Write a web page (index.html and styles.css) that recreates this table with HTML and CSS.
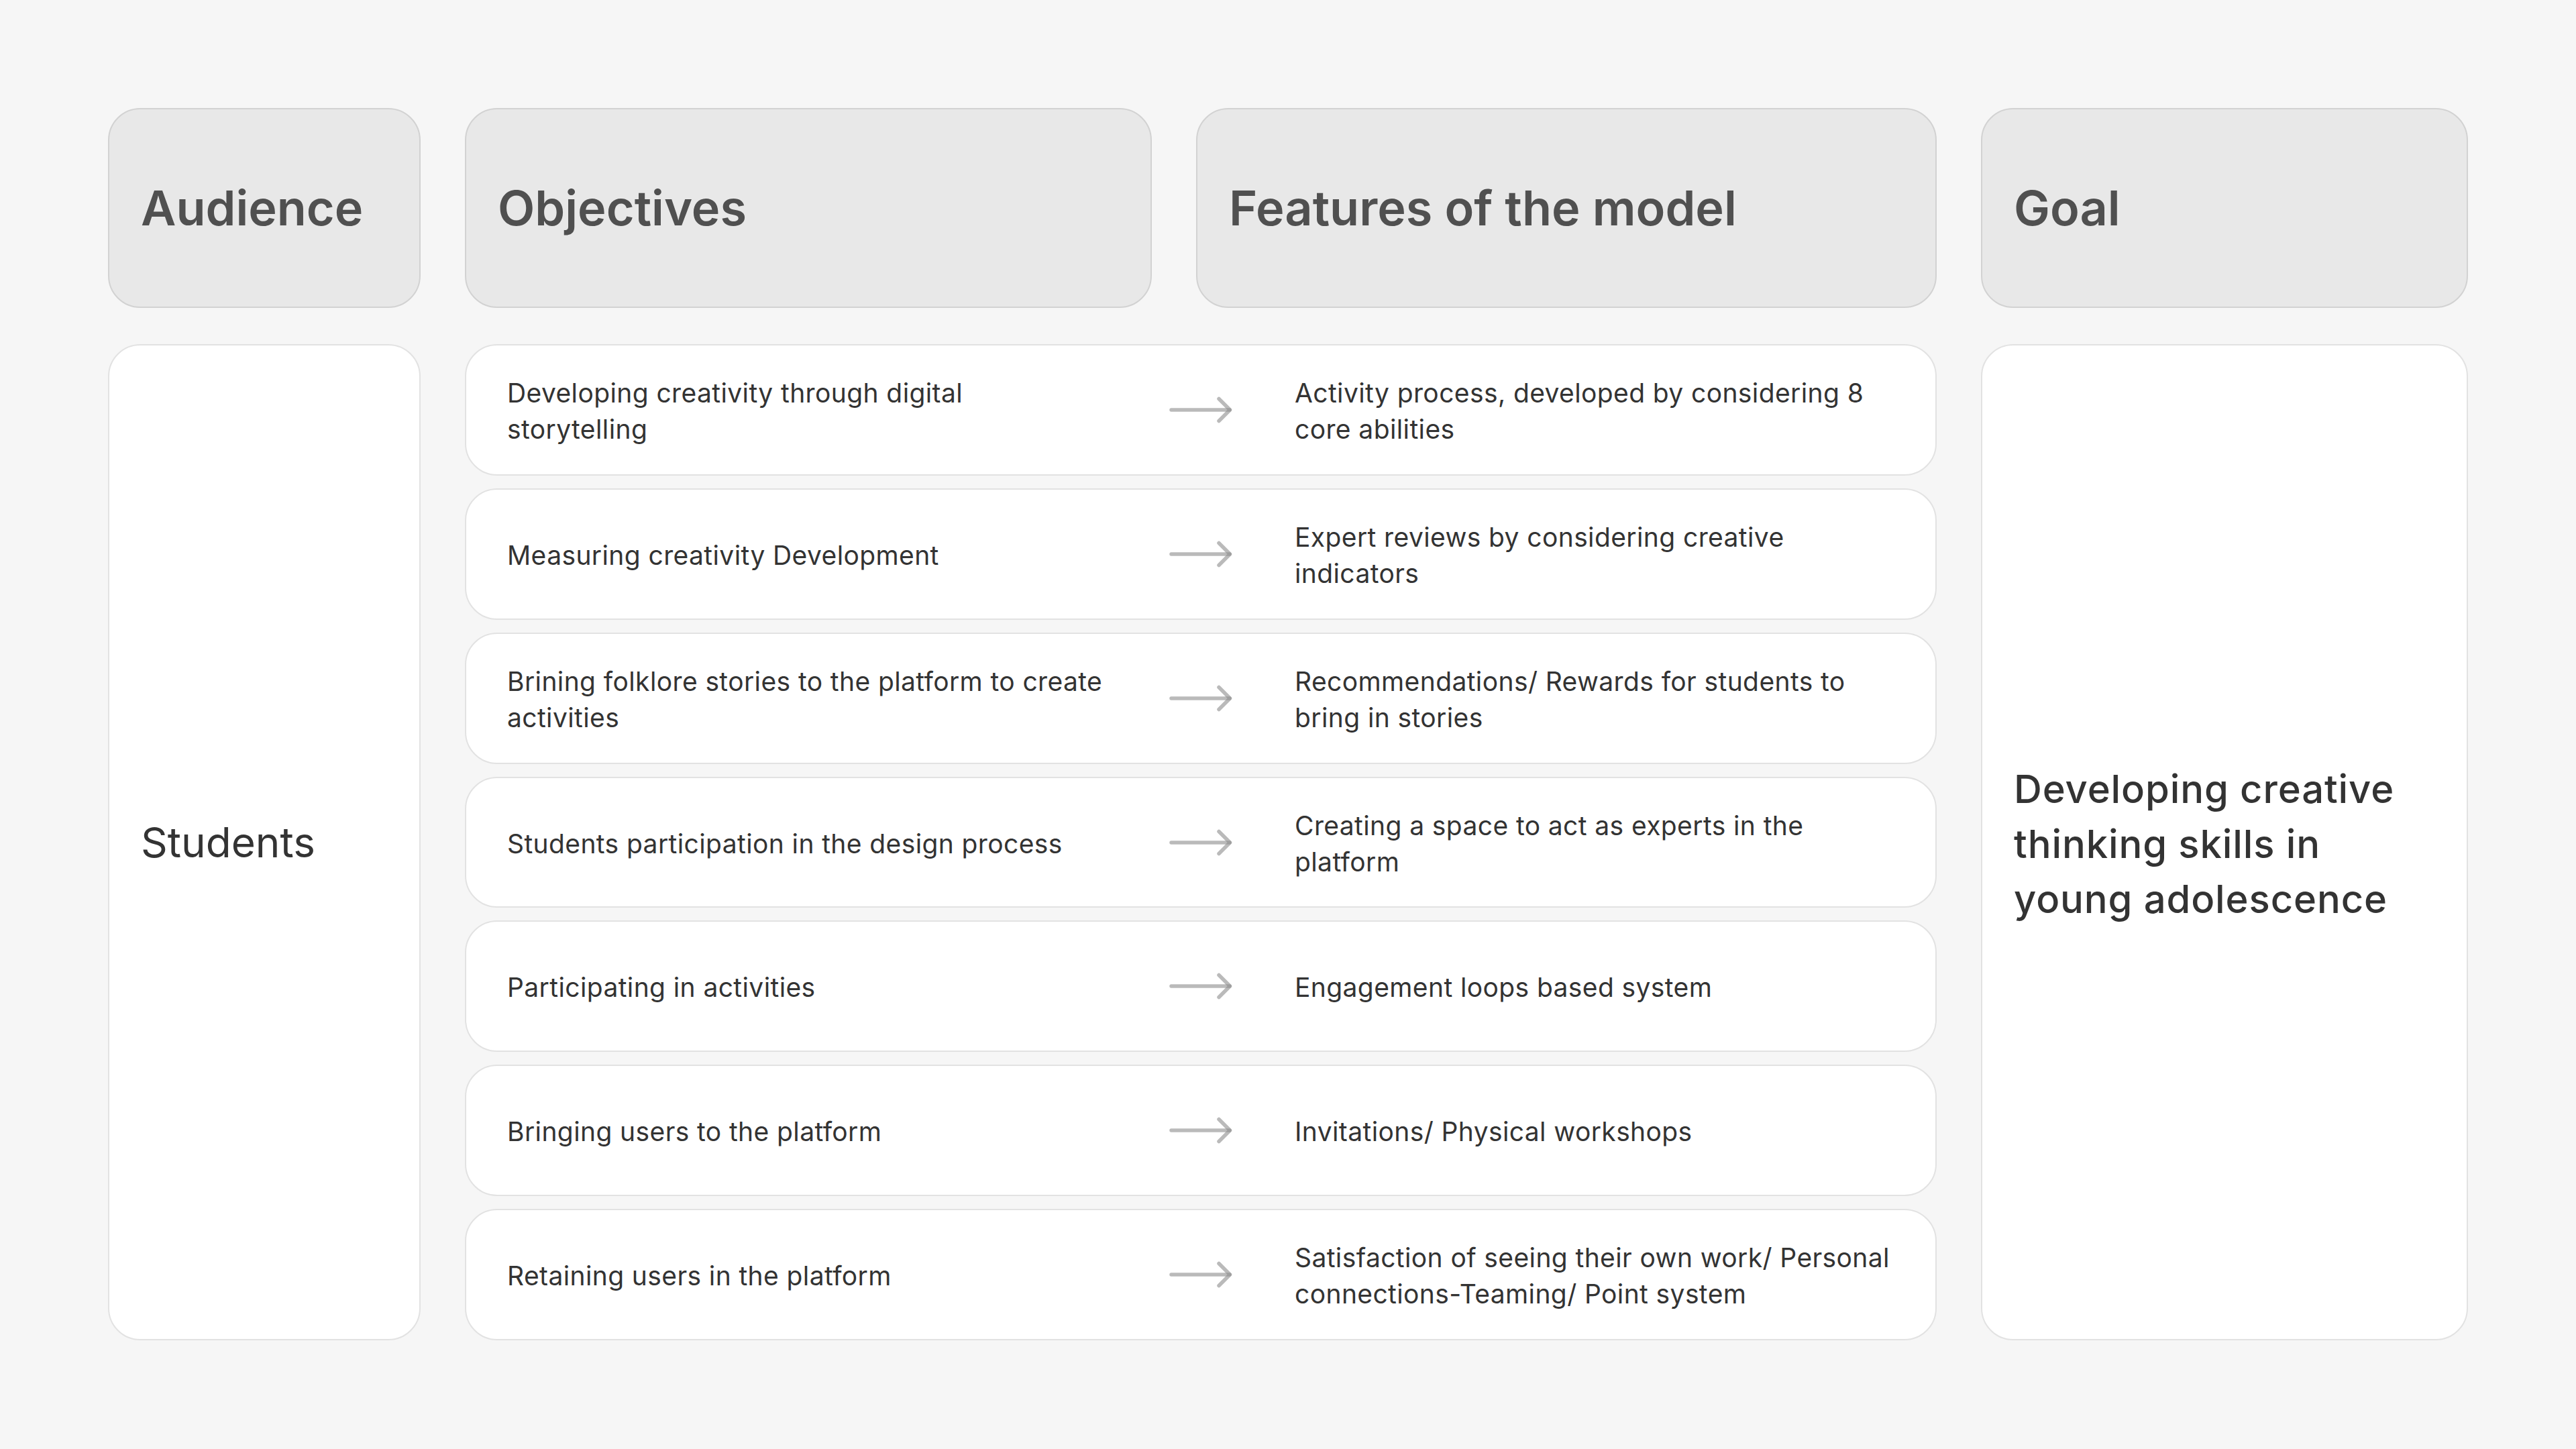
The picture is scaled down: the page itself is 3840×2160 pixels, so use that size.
FILE: index.html
```html
<!DOCTYPE html>
<html lang="en">
<head>
<meta charset="utf-8">
<title>Creativity model</title>
<link rel="stylesheet" href="styles.css">
</head>
<body>
<main class="board">
  <div class="head"><h2 class="head-title">Audience</h2></div>
  <div class="head"><h2 class="head-title">Objectives</h2></div>
  <div class="head"><h2 class="head-title">Features of the model</h2></div>
  <div class="head"><h2 class="head-title">Goal</h2></div>

  <div class="card audience"><p class="audience-text">Students</p></div>

  <div class="rows">
    <div class="row">
      <p class="cell">Developing creativity through digital<br>storytelling</p>
      <svg class="arrow" viewBox="0 0 94 40" width="94" height="40"><path d="M3 20H90"/><path d="M74 3.5L90.5 20L74 36.5"/></svg>
      <p class="cell feat">Activity process, developed by considering 8<br>core abilities</p>
    </div>
    <div class="row">
      <p class="cell">Measuring creativity Development</p>
      <svg class="arrow" viewBox="0 0 94 40" width="94" height="40"><path d="M3 20H90"/><path d="M74 3.5L90.5 20L74 36.5"/></svg>
      <p class="cell feat">Expert reviews by considering creative<br>indicators</p>
    </div>
    <div class="row">
      <p class="cell">Brining folklore stories to the platform to create<br>activities</p>
      <svg class="arrow" viewBox="0 0 94 40" width="94" height="40"><path d="M3 20H90"/><path d="M74 3.5L90.5 20L74 36.5"/></svg>
      <p class="cell feat">Recommendations/ Rewards for students to<br>bring in stories</p>
    </div>
    <div class="row">
      <p class="cell">Students participation in the design process</p>
      <svg class="arrow" viewBox="0 0 94 40" width="94" height="40"><path d="M3 20H90"/><path d="M74 3.5L90.5 20L74 36.5"/></svg>
      <p class="cell feat">Creating a space to act as experts in the<br>platform</p>
    </div>
    <div class="row">
      <p class="cell">Participating in activities</p>
      <svg class="arrow" viewBox="0 0 94 40" width="94" height="40"><path d="M3 20H90"/><path d="M74 3.5L90.5 20L74 36.5"/></svg>
      <p class="cell feat">Engagement loops based system</p>
    </div>
    <div class="row">
      <p class="cell">Bringing users to the platform</p>
      <svg class="arrow" viewBox="0 0 94 40" width="94" height="40"><path d="M3 20H90"/><path d="M74 3.5L90.5 20L74 36.5"/></svg>
      <p class="cell feat">Invitations/ Physical workshops</p>
    </div>
    <div class="row">
      <p class="cell">Retaining users in the platform</p>
      <svg class="arrow" viewBox="0 0 94 40" width="94" height="40"><path d="M3 20H90"/><path d="M74 3.5L90.5 20L74 36.5"/></svg>
      <p class="cell feat">Satisfaction of seeing their own work/ Personal<br>connections-Teaming/ Point system</p>
    </div>
  </div>

  <div class="card goal"><p class="goal-text">Developing creative<br>thinking skills in<br>young adolescence</p></div>
</main>
</body>
</html>
```

FILE: styles.css
```css
* { box-sizing: border-box; }
html, body {
  margin: 0;
  padding: 0;
  background: #f6f6f6;
}
body {
  font-family: Inter, "Noto Sans", "Liberation Sans", sans-serif;
  color: #333333;
}
.board {
  display: grid;
  grid-template-columns: 466px 1024px 1104px 726px;
  grid-template-rows: 298px 1485px;
  column-gap: 66px;
  row-gap: 54px;
  padding: 161px;
}
.head {
  background: #e8e8e8;
  border: 2px solid #d2d2d2;
  border-radius: 48px;
  display: flex;
  align-items: center;
  padding-left: 47px;
}
.head-title {
  margin: 0;
  font-size: 72px;
  font-weight: 600;
  color: #505050;
  letter-spacing: 0;
  line-height: 1;
}
.card {
  background: #ffffff;
  border: 2px solid #e2e2e2;
  border-radius: 48px;
  display: flex;
  align-items: center;
  padding-left: 47px;
}
.audience-text {
  margin: 0;
  font-size: 62px;
  font-weight: 400;
  color: #333333;
}
.goal {
  padding-top: 4px;
}
.goal-text {
  margin: 0;
  font-size: 58px;
  font-weight: 500;
  line-height: 82px;
  color: #333333;
  letter-spacing: 0.015em;
}
.rows {
  grid-column: 2 / 4;
  display: flex;
  flex-direction: column;
  gap: 19px;
}
.row {
  flex: 1;
  background: #ffffff;
  border: 2px solid #e2e2e2;
  border-radius: 48px;
  display: grid;
  grid-template-columns: 987px 94px 1fr;
  align-items: center;
  padding-left: 61px;
  padding-top: 4px;
}
.cell {
  margin: 0;
  font-size: 39px;
  line-height: 54px;
  font-weight: 400;
  color: #333333;
  white-space: nowrap;
  letter-spacing: 0.01em;
}
.feat {
  padding-left: 93px;
}
.arrow {
  display: block;
  margin-top: -4px;
  fill: none;
  stroke: rgba(140, 140, 140, 0.6);
  stroke-width: 5.5;
  stroke-linecap: round;
  stroke-linejoin: round;
}
```
